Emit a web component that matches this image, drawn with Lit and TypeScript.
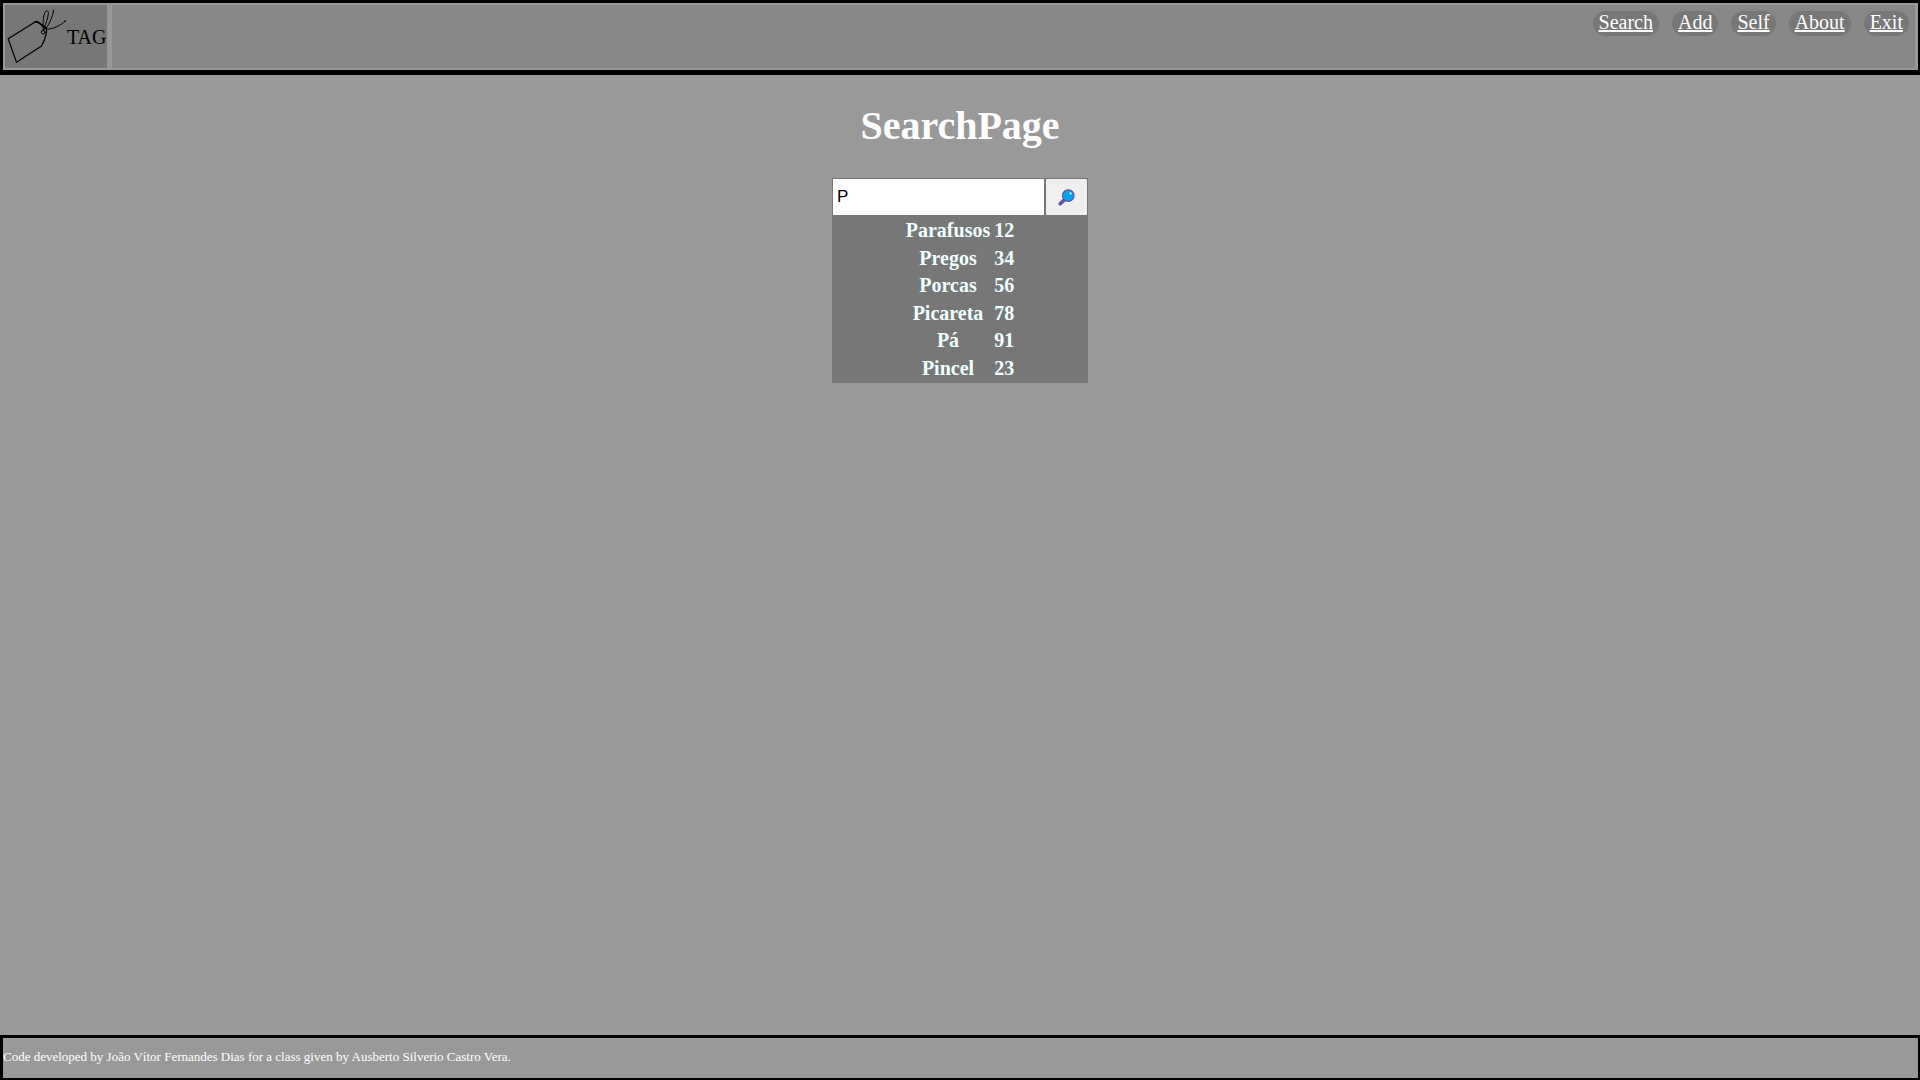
import { LitElement, html, css } from "lit";
import { customElement, property, state } from "lit/decorators.js";

interface Item {
  name: string;
  amount: number;
}

@customElement("tag-header")
class TagHeader extends LitElement {
  static styles = css`
    :host {
      display: block;
    }
    .bar {
      display: flex;
      gap: 5px;
      padding: 2px 3px 2px 2px;
      border: solid #000;
      border-width: 3px 2px 5px 3px;
    }
    .brand {
      display: flex;
      align-items: center;
      flex: none;
      color: #000;
      background: #777;
      font-size: 20px;
      line-height: 24px;
      text-decoration: none;
    }
    .logo {
      display: block;
      width: 62px;
      height: 63px;
    }
    .nav {
      flex: 1;
      display: flex;
      justify-content: flex-end;
      align-items: flex-start;
      gap: 13px;
      padding: 6px;
      background: #888;
    }
    .link {
      padding: 0 6px 2px;
      border-radius: 13px;
      background: #777;
      color: #fff;
      font-size: 20px;
      line-height: 23px;
    }
  `;

  private links = ["Search", "Add", "Self", "About", "Exit"];

  render() {
    return html`
      <header class="bar">
        <a class="brand" href="#home">
          <svg class="logo" viewBox="0 0 62 63" fill="none" stroke="#000" stroke-linejoin="round" stroke-linecap="round" aria-hidden="true">
            <path stroke-width="1.2" d="M3.2 33.8 L11.5 57.3 L36.5 41 Q39.5 36 41 29.5 Q42 25.5 41.5 24 L33.5 17.5 Q31.5 16.1 30 16.9 Z" />
            <path stroke-width="1.6" d="M30 16.9 Q31.5 16.1 33.5 17.5 L41.5 23.5" />
            <circle cx="38.2" cy="27.2" r="1.9" stroke-width="1" />
            <path stroke-width="1" d="M38.2 26 C38 20 37.8 11 40 7.4 C41.5 5 43.7 5.5 43.4 8.5 C43 13 40.8 18 39.2 23.5 C38.8 25 40.5 24.5 41.3 23.2 C44.5 18.5 48 11 48.6 5.2" />
            <path stroke-width="1" d="M38.5 22.5 L43 24.2 C49 23.5 55.5 20.5 60.3 16" />
            <path stroke-width="1.4" d="M59.6 16.5 L60.3 16" />
          </svg>
          <span>TAG</span>
        </a>
        <nav class="nav">
          ${this.links.map((l) => html`<a class="link" href="#${l.toLowerCase()}">${l}</a>`)}
        </nav>
      </header>
    `;
  }
}

@customElement("search-panel")
class SearchPanel extends LitElement {
  @property({ attribute: false }) items: Item[] = [];
  @state() private query = "P";

  static styles = css`
    :host {
      display: block;
    }
    .panel {
      width: 256px;
      margin: 0 auto;
      background: #777;
    }
    .form {
      display: flex;
      height: 38px;
    }
    .field {
      flex: 1;
      min-width: 0;
      box-sizing: border-box;
      margin: 0;
      padding: 0 4px;
      border: 1px solid #767676;
      border-radius: 0;
      outline: none;
      background: #fff;
      color: #000;
      font: 17px "Liberation Sans", Arial, sans-serif;
    }
    .submit {
      display: grid;
      place-items: center;
      width: 43px;
      box-sizing: border-box;
      margin: 0;
      padding: 0;
      border: 1px solid #767676;
      border-radius: 2px;
      background: #efefef;
    }
    .lens {
      display: block;
      width: 17px;
      height: 17px;
    }
    .results {
      height: 167px;
      margin: 0 auto;
      border-spacing: 2px;
      color: #f0ffff;
      font-size: 20px;
      line-height: 23px;
    }
    .cell {
      padding: 1px;
      font-weight: bold;
      text-align: center;
    }
  `;

  private onInput(e: Event) {
    this.query = (e.target as HTMLInputElement).value;
  }

  render() {
    const needle = this.query.toLowerCase();
    const found = this.items.filter((i) => i.name.toLowerCase().startsWith(needle));
    return html`
      <div class="panel">
        <form class="form" @submit=${(e: Event) => e.preventDefault()}>
          <input class="field" type="text" aria-label="Search" .value=${this.query} @input=${this.onInput} />
          <button class="submit" type="submit" aria-label="Search">
            <svg class="lens" viewBox="0 0 17 17" aria-hidden="true">
              <path d="M2.2 14.7 L6.6 10.6" stroke="#5f5399" stroke-width="3.6" stroke-linecap="round" />
              <circle cx="10.3" cy="6.6" r="5.8" fill="#00a3f0" stroke="#5c5498" stroke-width="1.1" />
              <circle cx="12.6" cy="4.4" r="1.1" fill="#d8f4ff" />
            </svg>
          </button>
        </form>
        <table class="results">
          <tbody>
            ${found.map(
              (i) => html`<tr>
                <th class="cell" scope="row">${i.name}</th>
                <td class="cell">${i.amount}</td>
              </tr>`
            )}
          </tbody>
        </table>
      </div>
    `;
  }
}

@customElement("app-root")
class AppRoot extends LitElement {
  static styles = css`
    :host {
      display: flex;
      flex-direction: column;
      min-height: 100vh;
      background: #999;
      color: #fff;
      font-family: "Liberation Serif", "Times New Roman", serif;
    }
    .main {
      flex: 1;
    }
    .title {
      margin: 28px 0 29px;
      font-size: 40px;
      line-height: 46px;
      text-align: center;
    }
    .footer {
      padding: 11px 0 14px;
      border: solid #000;
      border-width: 3px 2px 2px 3px;
      font-size: 13px;
      line-height: 15px;
    }
    .credit {
      margin: 0;
    }
  `;

  private items: Item[] = [
    { name: "Parafusos", amount: 12 },
    { name: "Pregos", amount: 34 },
    { name: "Porcas", amount: 56 },
    { name: "Picareta", amount: 78 },
    { name: "Pá", amount: 91 },
    { name: "Pincel", amount: 23 },
  ];

  render() {
    return html`
      <tag-header></tag-header>
      <main class="main">
        <h1 class="title">SearchPage</h1>
        <search-panel .items=${this.items}></search-panel>
      </main>
      <footer class="footer">
        <p class="credit">Code developed by João Vítor Fernandes Dias for a class given by Ausberto Silverio Castro Vera.</p>
      </footer>
    `;
  }
}
